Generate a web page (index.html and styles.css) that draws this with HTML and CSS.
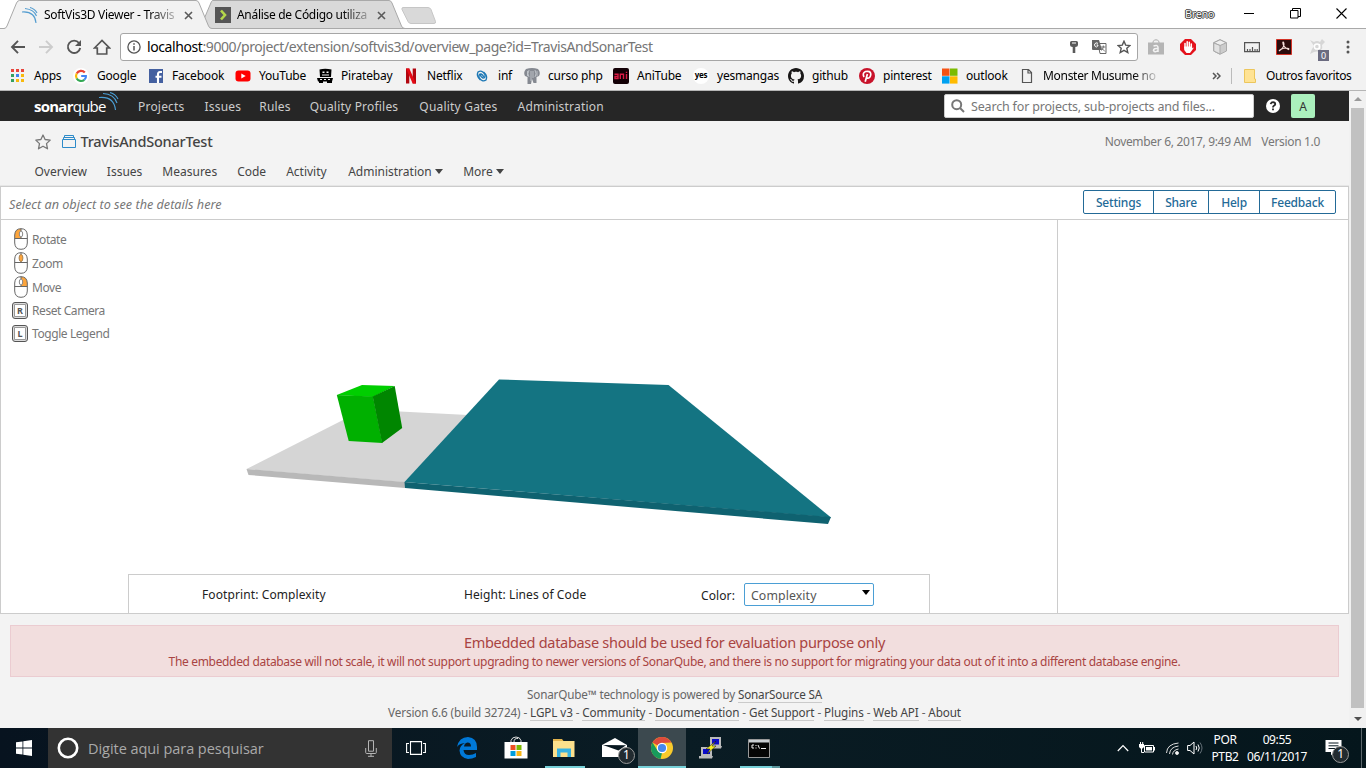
FILE: index.html
```html
<!DOCTYPE html>
<html lang="pt-BR">
<head>
<meta charset="utf-8">
<title>SoftVis3D Viewer - TravisAndSonarTest</title>
<link rel="stylesheet" href="styles.css">
</head>
<body>
<div class="tabstrip">
  <svg class="tab-shapes" width="450" height="29" viewBox="0 0 450 29">
    <path d="M0 28.5H450" stroke="#a9a9a9"/>
    <path d="M200 28.5L211.500 1.500Q212 .5 213 .5H389Q391 .5 392 3L401.500 26Q402.500 28.500 405 28.500Z" fill="#d9d9d9" stroke="#a9a9a9"/>
    <path d="M403 7.500H428Q430 7.500 431 9.500L435.500 21.500Q436 23.500 434 23.500H411Q409 23.500 408 21.500L402 9.500Q401.500 7.500 403 7.500Z" fill="#d9d9d9" stroke="#c6c6c6"/>
    <path d="M0 29V28.500H4Q6 28.500 7 26L16.500 3Q17.500 .5 19.500 .5H196Q198 .5 199 3L208.500 26Q209.500 28.500 212 28.500V29Z" fill="#f2f2f2"/>
    <path d="M0 28.500H4Q6 28.500 7 26L16.500 3Q17.500 .5 19.500 .5H196Q198 .5 199 3L208.500 26Q209.500 28.500 212 28.500" fill="none" stroke="#a9a9a9"/>
  </svg>
  <div class="tab tab-one">
    <svg width="16" height="16" viewBox="0 0 16 16" fill="none" stroke="#549dd0" stroke-width="1.100"><path d="M0 5Q13 4 14 16M3 1.500Q12 2.500 14.500 9M8 .5Q13 2 15 6"/></svg>
    <span class="tab-title">SoftVis3D Viewer - Travis</span>
    <svg class="x" width="9" height="9" viewBox="0 0 9 9"><path d="M1 1L8 8M8 1L1 8" stroke="#5a5a5a" stroke-width="1.600"/></svg>
  </div>
  <div class="tab tab-two">
    <svg width="16" height="16" viewBox="0 0 16 16"><path fill="#555" d="M0 0h16v16H0z"/><path d="M6 3.500L10 8L6 12.500" fill="none" stroke="#b5d84b" stroke-width="2.600"/></svg>
    <span class="tab-title">Análise de Código utiliza</span>
    <svg class="x" width="9" height="9" viewBox="0 0 9 9"><path d="M1 1L8 8M8 1L1 8" stroke="#5a5a5a" stroke-width="1.600"/></svg>
  </div>
  <div class="window-controls">
    <span class="user">Breno</span>
    <svg width="11" height="11" viewBox="0 0 11 11"><path d="M0 5.500h10" stroke="#000"/></svg>
    <svg width="11" height="11" viewBox="0 0 11 11" fill="none" stroke="#000"><path d="M.5 2.500h7.500v7.500h-7.500zM2.500 2.500v-2h8v8h-2.500"/></svg>
    <svg width="11" height="11" viewBox="0 0 11 11"><path d="M.5 .5l10 10M10.500 .5l-10 10" stroke="#000" stroke-width="1.100"/></svg>
  </div>
</div>

<div class="toolbar">
  <div class="nav-buttons">
    <svg width="16" height="16" viewBox="0 0 16 16" fill="none" stroke="#555" stroke-width="1.900"><path d="M15 8H2.500M8 1.800L2 8l6 6.200"/></svg>
    <svg width="16" height="16" viewBox="0 0 16 16" fill="none" stroke="#ccc" stroke-width="1.900"><path d="M1 8h12.500M8 1.800L14 8l-6 6.200"/></svg>
    <svg width="16" height="16" viewBox="0 0 16 16"><path d="M13 4A6.200 6.200 0 1 0 14.200 9" fill="none" stroke="#555" stroke-width="1.900"/><path d="M15 1v6H9z" fill="#555"/></svg>
    <svg width="18" height="16" viewBox="0 0 18 16"><path d="M1.500 9L9 1.500L16.500 9H13.700V15H4.300V9Z" fill="none" stroke="#555" stroke-width="1.700"/></svg>
  </div>
  <div class="omnibox">
    <svg width="14" height="14" viewBox="0 0 14 14"><circle cx="7" cy="7" r="6.100" fill="none" stroke="#555" stroke-width="1.300"/><path d="M7 6v4.500M7 3.300v1.500" stroke="#555" stroke-width="1.500"/></svg>
    <span class="url"><b>localhost</b>:9000/project/extension/softvis3d/overview_page?id=TravisAndSonarTest</span>
    <svg width="10" height="14" viewBox="0 0 10 14"><path d="M1 2.500Q1 1 2.500 1H7.500Q9 1 9 2.500V5Q9 7 6.300 7V13H3.700V7Q1 7 1 5Z" fill="#5a5a5a"/><path d="M3 3h4" stroke="#fff"/></svg>
    <svg width="15" height="14" viewBox="0 0 15 14"><path fill="#fff" stroke="#666" d="M6 3.500h8v10H8z"/><path fill="#666" d="M0 0h7l3 10H1Q0 10 0 9z"/><path d="M6 3.500Q5 2.500 4 3Q2.500 3.500 2.500 5Q3 7 4.500 7Q6 6.500 6 5H4.500" fill="none" stroke="#fff"/><path d="M9 7h4.500M11.300 5.500V7Q11 9 9.500 10.500M9.500 8L13 11.500" fill="none" stroke="#666" stroke-width=".9"/></svg>
    <svg width="14" height="14" viewBox="0 0 14 14"><path d="M7 1.200L8.700 5.100L13 5.500L9.800 8.300L10.800 12.500L7 10.300L3.200 12.500L4.200 8.300L1 5.500L5.300 5.100Z" fill="none" stroke="#555" stroke-width="1.400"/></svg>
  </div>
  <div class="extensions">
    <svg width="16" height="16" viewBox="0 0 16 16"><path d="M5 4V2.500Q8 -1 11 2.500V4" fill="none" stroke="#aaa"/><path fill="#b5b5b5" d="M0 3.500h16v12H0z"/><path d="M5.500 7Q10 5.500 10 8.500V13M10 9.500Q5.500 9 5.500 11.500Q7 14 10 11.500" fill="none" stroke="#f3f3f3" stroke-width="1.500"/></svg>
    <svg width="16" height="16" viewBox="0 0 16 16"><path fill="#e4121c" d="M5 0h6l5 5v6l-5 5H5l-5-5V5z"/><path d="M5 9V4.500M7.200 8V2.800M9.300 8V3.200M11.300 9V5" stroke="#fff" stroke-width="1.500" stroke-linecap="round"/><path fill="#fff" d="M4.200 7.500h7.900v2l1-1 .6.600L10 14H6.500L4.200 11z"/></svg>
    <svg width="16" height="16" viewBox="0 0 16 16" stroke="#aaa"><path d="M8 .6L14.500 3.700V12L8 15.300L1.500 12V3.700Z" fill="#ccc"/><path d="M1.800 3.800L8 6.500L14.200 3.800L8 .8Z" fill="#eee"/><path d="M8 6.500V15L1.800 12V4Z" fill="#e2e2e2"/></svg>
    <svg width="16" height="16" viewBox="0 0 16 16" fill="none" stroke="#555"><path stroke-width="1.200" d="M.6 3.600h14.800v9H.6zM3.500 10v2.500M6 10v2.500M8.500 8v4.500M11 10v2.500M13.200 10v2.500"/></svg>
    <svg width="16" height="16" viewBox="0 0 16 16"><path d="M.5 .5h15v15H.5z" fill="#2b0c0d" stroke="#d33327"/><path d="M3 12Q8 9 8 5Q7.500 2 6.800 3.500Q7 8 12.500 10.500Q14 9 10 9Q4.500 9.500 3 12Z" fill="none" stroke="#f5dedc" stroke-width="1.100"/></svg>
    <span class="ext-count"><svg width="16" height="16" viewBox="0 0 16 16"><path d="M1 1L5 3Q8 1 11 3L13 0L16 3L13 6Q14 9 12 11L11 13Q7 12 5 13L1 15L3 10L5 7Z" fill="#d6d6d6"/><circle cx="8" cy="7.500" r="2.600" fill="none" stroke="#fff" stroke-width="1.500"/><path d="M10.500 5v5" stroke="#fff" stroke-width="1.500"/></svg><i>0</i></span>
    <svg width="4" height="14" viewBox="0 0 4 14" fill="#555"><circle cx="2" cy="2" r="1.500"/><circle cx="2" cy="7" r="1.500"/><circle cx="2" cy="12" r="1.500"/></svg>
  </div>
</div>

<div class="bookmarks">
  <span class="bm bm-apps"><svg width="16" height="16" viewBox="0 0 16 16"><path fill="#e8453c" d="M1 1h3v3H1zM6 1h3v3H6zM11 1h3v3h-3z"/><path fill="#34a060" d="M1 6h3v3H1zM1 11h3v3H1z"/><path fill="#3f83ee" d="M6 6h3v3H6z"/><path fill="#f8b90c" d="M11 6h3v3h-3zM11 11h3v3h-3zM6 11h3v3H6z"/></svg>Apps</span>
  <span class="bm bm-google"><svg width="16" height="16" viewBox="0 0 16 16" fill="none" stroke-width="2.200"><circle cx="8" cy="8" r="8" fill="#fff"/><path d="M11.800 4.500A5 5 0 0 0 3.700 5.500" stroke="#ea4335"/><path d="M3.700 5.500A5 5 0 0 0 3.700 10.500" stroke="#fbbc05"/><path d="M3.700 10.500A5 5 0 0 0 11.300 11.800" stroke="#34a853"/><path d="M11.300 11.800Q13.300 10 12.900 8H8.200" stroke="#4285f4"/></svg>Google</span>
  <span class="bm bm-facebook"><svg width="16" height="16" viewBox="0 0 16 16"><path fill="#4460a0" d="M1 1h14v14H1z"/><path d="M10 15V6.500Q10 4 12 4H14M7.500 8.700H13.500" fill="none" stroke="#fff" stroke-width="2.100"/></svg>Facebook</span>
  <span class="bm bm-youtube"><svg width="16" height="16" viewBox="0 0 16 16"><rect y="2.500" x=".5" width="15" height="11" rx="3" fill="#f00"/><path fill="#fff" d="M6.300 5.500L10.700 8L6.300 10.500z"/></svg>YouTube</span>
  <span class="bm bm-pirate"><svg width="16" height="16" viewBox="0 0 16 16"><path d="M2.500 1.500Q8 0 14.500 1.500L14 9H3zM0 10h16l-1 3.500H1zM2 13.500h4V15H2zM10 13.500h5V15h-5z"/><path fill="#f2f2f2" d="M5.500 3.500h2v1.500h-2zM9.500 3.500h2v1.500h-2zM5 6.500h7v1H5zM3 11h2v1H3zM7 11h2v1H7zM11 11h2v1h-2z"/></svg>Piratebay</span>
  <span class="bm bm-netflix"><svg width="16" height="16" viewBox="0 0 16 16"><path fill="#b1060f" d="M3 .5h3.300v15H3zM9.700 .5H13v15H9.700z"/><path fill="#e50914" d="M3 .5h3.300L13 15.500H9.700z"/></svg>Netflix</span>
  <span class="bm bm-inf"><svg width="16" height="16" viewBox="0 0 16 16" fill="none" stroke="#1d78b5" stroke-width="1.400"><path d="M6.500 12Q2 8 4 4Q8 1.500 11 6.500Q11.500 10 9 10Q6.500 9 6.500 7"/><path d="M9.500 4Q14 8 12 12Q8 14.500 5 9.500Q4.500 6 7 6Q9.500 7 9.500 9"/></svg>inf</span>
  <span class="bm bm-curso"><svg width="16" height="16" viewBox="0 0 16 16"><path fill="#858991" d="M2 1Q8-1 14 1Q17 4 15 8L12.500 9V15H9.500L8 11L7 16H3.500V9L1 8Q-1 4 2 1z"/><path d="M5 2Q3 6 5 9M11 2Q13 6 11 9M7 3v10M9 3v7M3.500 3v5M13 3v5" fill="none" stroke="#ccd0d5" stroke-width=".8"/></svg>curso php</span>
  <span class="bm bm-ani"><svg width="16" height="16" viewBox="0 0 16 16"><rect width="16" height="16" rx="2" fill="#130006"/><path d="M1.500 6.200H5V10.500H2V8.500H5M7.300 11V6.200H10.500V11M13.500 6v5M13.500 3.800v1.300" fill="none" stroke="#da1c46" stroke-width="1.400"/></svg>AniTube</span>
  <span class="bm bm-yes"><span class="yes-icon">yes</span>yesmangas</span>
  <span class="bm bm-github"><svg width="16" height="16" viewBox="0 0 16 16"><path fill="#191717" d="M8 0C3.580 0 0 3.580 0 8c0 3.540 2.290 6.530 5.470 7.590.4.070.55-.17.550-.38 0-.19-.01-.82-.01-1.490-2.010.37-2.530-.49-2.690-.94-.09-.23-.48-.94-.82-1.130-.28-.15-.68-.52-.01-.53.63-.01 1.080.58 1.230.82.72 1.210 1.870.87 2.330.66.070-.52.28-.87.510-1.070-1.780-.2-3.640-.89-3.640-3.950 0-.87.310-1.590.82-2.150-.08-.2-.36-1.020.08-2.120 0 0 .67-.21 2.200.82.64-.18 1.320-.27 2-.27s1.360.09 2 .27c1.530-1.040 2.200-.82 2.200-.82.44 1.100.16 1.920.08 2.120.51.56.82 1.270.82 2.150 0 3.070-1.870 3.750-3.650 3.950.29.25.54.73.54 1.480 0 1.070-.01 1.930-.01 2.200 0 .21.15.46.55.38A8.010 8.010 0 0 0 16 8c0-4.420-3.580-8-8-8z"/></svg>github</span>
  <span class="bm bm-pinterest"><svg width="16" height="16" viewBox="0 0 16 16"><circle cx="8" cy="8" r="8" fill="#c8132b"/><path d="M5 9Q3 5 6.500 3.500Q11.500 2.500 11.800 6Q11.500 10 9 10.200Q7.500 10 7.500 9M8.400 6L6.200 13.800" fill="none" stroke="#fff" stroke-width="1.700"/></svg>pinterest</span>
  <span class="bm bm-outlook"><svg width="16" height="16" viewBox="0 0 16 16"><path fill="#f65314" d="M0 .5h7.500v7.300H0z"/><path fill="#7cbb00" d="M8 .5h7.500v7.300H8z"/><path fill="#00a1f1" d="M0 8.300h7.500v7.300H0z"/><path fill="#ffbb00" d="M8 8.300h7.500v7.300H8z"/></svg>outlook</span>
  <span class="bm bm-monster"><svg width="16" height="16" viewBox="0 0 16 16"><path d="M3.500 1.500H9.500L12.500 4.500V14.500H3.500ZM9 1.500V5H12.500" fill="none" stroke="#555" stroke-width="1.200"/></svg>Monster Musume no</span>
  <svg class="more-bm" width="9" height="8" viewBox="0 0 9 8"><path d="M1 1l3 3-3 3M5 1l3 3-3 3" fill="none" stroke="#555" stroke-width="1.500"/></svg>
  <span class="bm-sep"></span>
  <span class="bm bm-other"><svg width="14" height="16" viewBox="0 0 14 16"><path d="M.5 1.500h10v9.500h1v3.500h-11z" fill="#ffe394" stroke="#ecc65c"/></svg>Outros favoritos</span>
</div>

<div class="page">
  <main class="content">
    <nav class="topnav">
      <div class="logo"><b>sonar</b>qube<svg width="20" height="19" viewBox="0 0 20 19" fill="none" stroke="#4b9fd5" stroke-width="1.100"><path d="M0 5.500Q15 4 16.500 18M4 1.500Q15 2 18 11M11 .5Q16.500 2 19 7"/></svg></div>
      <div class="topnav-links"><a>Projects</a><a>Issues</a><a class="n-rules">Rules</a><a class="n-prof">Quality Profiles</a><a class="n-gates">Quality Gates</a><a>Administration</a></div>
      <div class="search"><svg width="14" height="14" viewBox="0 0 14 14" fill="none" stroke="#777" stroke-width="2"><circle cx="5.700" cy="5.700" r="4.500"/><path d="M9 9l4 4"/></svg><span>Search for projects, sub-projects and files...</span></div>
      <svg class="help" width="14" height="14" viewBox="0 0 14 14"><circle cx="7" cy="7" r="7" fill="#fff"/><path d="M4.700 5.200Q4.900 3.200 7 3.200Q9.300 3.300 9.200 5.200Q9 6.200 7.900 6.700Q7 7.200 7 8.400M7 9.500v1.800" fill="none" stroke="#262626" stroke-width="1.800"/></svg>
      <span class="avatar">A</span>
    </nav>
    <header class="project">
      <div class="project-row">
        <svg width="16" height="16" viewBox="0 0 16 16"><path d="M8 1L10.100 5.500L15.200 6.100L11.500 9.600L12.500 14.800L8 12.200L3.500 14.800L4.500 9.600L.8 6.100L5.900 5.500Z" fill="none" stroke="#777" stroke-width="1.300" stroke-linejoin="round"/></svg>
        <svg class="cube-icon" width="14" height="14" viewBox="0 0 14 14" fill="none" stroke="#2d8bc9"><path d="M.5 4.500h13v8h-13zM1.500 4V2.500h11V4M2.500 2V.5h9V2" /></svg>
        <h1>TravisAndSonarTest</h1>
        <span class="date">November 6, 2017, 9:49 AM</span><span class="version">Version 1.0</span>
      </div>
      <div class="subnav"><a>Overview</a><a>Issues</a><a>Measures</a><a>Code</a><a>Activity</a><a class="s-admin">Administration<i class="caret"></i></a><a>More<i class="caret"></i></a></div>
    </header>
    <section class="viewer">
      <div class="viewer-head"><em>Select an object to see the details here</em>
        <div class="buttons"><span class="b-set">Settings</span><span class="b-share">Share</span><span class="b-help">Help</span><span class="b-feed">Feedback</span></div>
      </div>
      <div class="viewer-body">
        <div class="scene">
          <svg class="scene-canvas" width="1056" height="393" viewBox="1 220 1056 393">
            <path fill="#d5d5d5" d="M246.500 469L343 420L365 410L400 411.500L468 415L405 482.300Z"/>
            <path fill="#b8b8b8" d="M246.500 469L405 482V488L248.500 475Z"/>
            <path fill="#147482" d="M499 379.500L668.500 385L831 517.500L404.500 482Z"/>
            <path fill="#0f6270" d="M404.500 482L831 517L828 524L405 488Z"/>
            <path fill="#00ce00" d="M336.800 395L362 385L394.700 386L373 397Z"/>
            <path fill="#00b000" d="M336.800 395L373 396.500L382.300 443L348.700 441Z"/>
            <path fill="#008600" d="M372.700 396.500L394.700 386L402.200 428L382 443Z"/>
          </svg>
          <ul class="controls">
            <li class="mouse"><svg width="14" height="22" viewBox="0 0 14 22"><path d="M.7 10.500V7Q1 .7 7 .7V10.500Z" fill="#fda53c"/><path d="M.7 7Q1 .7 7 .7Q13 .7 13.300 7V15Q13 21.300 7 21.300Q1 21.300 .7 15ZM.7 10.500H13.300M7 .7V10.500" fill="none" stroke="#666"/><ellipse cx="7" cy="6" rx="1.700" ry="3" fill="#fff" stroke="#888"/></svg><span>Rotate</span></li>
            <li class="mouse"><svg width="14" height="22" viewBox="0 0 14 22"><path d="M.7 7Q1 .7 7 .7Q13 .7 13.300 7V15Q13 21.300 7 21.300Q1 21.300 .7 15ZM.7 10.500H13.300M7 .7V10.500" fill="none" stroke="#666"/><ellipse cx="7" cy="6" rx="1.900" ry="3.500" fill="#fda53c" stroke="#a98252"/></svg><span>Zoom</span></li>
            <li class="mouse"><svg width="14" height="22" viewBox="0 0 14 22"><path d="M7 10.500V.7Q13 .7 13.300 7V10.500Z" fill="#fda53c"/><path d="M.7 7Q1 .7 7 .7Q13 .7 13.300 7V15Q13 21.300 7 21.300Q1 21.300 .7 15ZM.7 10.500H13.300M7 .7V10.500" fill="none" stroke="#666"/><ellipse cx="7" cy="6" rx="1.700" ry="3" fill="#fff" stroke="#888"/></svg><span>Move</span></li>
            <li class="key"><b>R</b>Reset Camera</li>
            <li class="key"><b>L</b>Toggle Legend</li>
          </ul>
          <div class="legend"><span class="l-foot">Footprint: Complexity</span><span class="l-height">Height: Lines of Code</span><span class="l-color">Color:</span><span class="select">Complexity<i class="caret"></i></span></div>
        </div>
        <aside class="side"></aside>
      </div>
    </section>
    <footer class="footer">
      <div class="alert"><p class="alert-title">Embedded database should be used for evaluation purpose only</p><p class="alert-text">The embedded database will not scale, it will not support upgrading to newer versions of SonarQube, and there is no support for migrating your data out of it into a different database engine.</p></div>
      <p class="powered">SonarQube™ technology is powered by <a>SonarSource SA</a></p>
      <p class="links">Version 6.6 (build 32724) - <a>LGPL v3</a> - <a>Community</a> - <a>Documentation</a> - <a>Get Support</a> - <a>Plugins</a> - <a>Web API</a> - <a>About</a></p>
    </footer>
  </main>
  <div class="scrollbar"><i class="up"></i><span class="thumb"></span><i class="down"></i></div>
</div>

<div class="taskbar">
  <div class="start"><svg width="16" height="16" viewBox="0 0 16 16" fill="#fff"><path d="M0 2.300L6.500 1.400V7.500H0zM7.300 1.300L16 0V7.500H7.300zM0 8.400H6.500V14.600L0 13.700zM7.300 8.400H16V16L7.300 14.700z"/></svg></div>
  <div class="cortana"><svg width="22" height="22" viewBox="0 0 22 22"><circle cx="11" cy="11" r="9.200" fill="none" stroke="#fff" stroke-width="2.600"/></svg><span>Digite aqui para pesquisar</span><svg width="12" height="17" viewBox="0 0 12 17" fill="none" stroke="#b5b5b5"><path d="M3.500 .7h5v10.500h-5zM.7 8v4.500q0 1 1 1h8.600q1 0 1-1V8M6 13.500v3M3 16.300h6"/></svg></div>
  <div class="apps">
    <span class="app"><svg width="20" height="14" viewBox="0 0 20 14" fill="none" stroke="#fff" stroke-width="1.100"><path d="M4.500 .6h11v12.800h-11zM3 2.500H.6v9H3M17 2.500h2.400v9H17"/></svg></span>
    <span class="app app-edge"><svg width="20" height="22" viewBox="0 0 20 22"><path fill="#0078d7" d="M0 10Q2 0 11 0Q20 1 20 10V13H6.500Q7 18 12 18Q16 18 19 16V20Q15 22 11 22Q3 21 2.500 13.500Q3 8 8 6Q2 6.500 0 10ZM7 9.500H14Q14 5.500 10.500 5.500Q7.500 6 7 9.500Z"/></svg></span>
    <span class="app app-store"><svg width="24" height="24" viewBox="0 0 24 24"><path d="M7 7V4.500Q8 1 12 1Q16 1 17 4.500V7M10 6Q10 2 14 2.500" fill="none" stroke="#ddd"/><path fill="#fff" d="M.5 6h23v16.500h-23z"/><path fill="#f05022" d="M6.500 9h5v5h-5z"/><path fill="#7db900" d="M12.500 9h5v5h-5z"/><path fill="#009ddc" d="M6.500 15h5v5h-5z"/><path fill="#f8b617" d="M12.500 15h5v5h-5z"/></svg></span>
    <span class="app app-files"><svg width="22" height="18" viewBox="0 0 22 18"><path fill="#e2b34d" d="M0 0h9l1.500 2H0z"/><path fill="#fce08c" d="M0 2h21.500v16H0z"/><path fill="#37b2e2" d="M4 9.500h14V18h-3.500v-4.500h-7V18H4z"/></svg></span>
    <span class="app app-mail"><svg width="26" height="20" viewBox="0 0 26 20"><path fill="#fff" d="M0 7L13 0L25 7V19H0z"/><path fill="#071720" d="M1 7L24 7.200L16.500 12.500Z"/></svg><i class="badge">1</i></span>
    <span class="app app-chrome"><svg width="22" height="22" viewBox="0 0 22 22"><circle cx="11" cy="11" r="11" fill="#f8ca2c"/><path fill="#dd4b3c" d="M11 11L1.500 5.500A11 11 0 0 1 20.500 5.500L11 6Z"/><path fill="#179b5c" d="M1.500 5.500L6.500 13.500L11 16L9.500 22A11 11 0 0 1 1.500 5.500Z"/><circle cx="11" cy="11" r="5.200" fill="#fff"/><circle cx="11" cy="11" r="4.100" fill="#4688ee"/></svg></span>
    <span class="app app-putty"><svg width="24" height="24" viewBox="0 0 24 24"><path fill="#bbb" d="M11 1h11v9H11zM13 10h10l-1 2.500h-9zM2 11h11v9H2zM0 20h14l-1 2.500H0z"/><path fill="#0b0bc9" d="M13 3h7v5.500h-7zM4 13h7v5H4z"/><path fill="#f7ee20" stroke="#111" stroke-width=".5" d="M17 5L7 13h4l-3 5 9-8h-4z"/></svg></span>
    <span class="app app-cmd"><svg width="22" height="19" viewBox="0 0 22 19"><path fill="#050505" stroke="#999" d="M.5 .5h21v18H.5z"/><path fill="#c9ced2" d="M1 1h20v2.500H1z"/><path d="M6 6H4v3h2M8 6v1M8 8.500v1M10 6l1.500 3.500M13 9.500h5" fill="none" stroke="#eee"/></svg></span>
  </div>
  <div class="tray">
    <svg class="t-up" width="12" height="8" viewBox="0 0 12 8"><path d="M.8 7L6 1.500L11.200 7" fill="none" stroke="#fff" stroke-width="1.200"/></svg>
    <svg class="t-bat" width="16" height="12" viewBox="0 0 16 12"><path d="M5.500 3.500h9v6.500h-9z" fill="none" stroke="#fff"/><path fill="#fff" d="M7 5h6v3.500H7zM15 5h1v3.500h-1zM0 2h5v3l-1.500 1.500h-2L0 5zM1 0h1v2H1zM3.200 0h1v2h-1z"/><path d="M2.500 6v4.500H5" fill="none" stroke="#fff"/></svg>
    <svg class="t-wifi" width="13" height="13" viewBox="0 0 13 13" fill="none" stroke="#ddd"><path d="M.5 11Q1 2 12.500 1M3.500 12Q4 5 12.500 4M6.500 12.500Q7 8 12.500 7"/><circle cx="11" cy="11" r="1.500" fill="#fff"/></svg>
    <svg class="t-vol" width="17" height="14" viewBox="0 0 17 14" fill="none" stroke="#fff"><path d="M.6 4.500H3L7 1V13L3 9.500H.6ZM9 5Q10.500 7 9 9M11 3.500Q13.500 7 11 10.500"/><path stroke="#657078" d="M13 1.500Q17 7 13 12.500"/></svg>
    <span class="lang">POR<br>PTB2</span>
    <span class="clock">09:55<br>06/11/2017</span>
    <span class="notif"><svg width="17" height="16" viewBox="0 0 17 16"><path fill="#fff" d="M.5 0h16v12H9l-3 3.500V12H.5z"/><path d="M3.500 3h10M3.500 5.800h10M3.500 8.500h7" stroke="#071720"/></svg><i class="badge">1</i></span>
    <span class="desktop-edge"></span>
  </div>
</div>
</body>
</html>
```
FILE: styles.css
```css
* { box-sizing: border-box; }
body { margin: 0; width: 1366px; height: 768px; overflow: hidden; display: flex; flex-direction: column; font: 12px/18px "Noto Sans", sans-serif; background: #fff; color: #000; }
p, h1, ul { margin: 0; padding: 0; }
svg { flex: none; display: block; }
i { font-style: normal; }
span, a { white-space: nowrap; }

.tabstrip { position: relative; height: 29px; border-bottom: 1px solid #a9a9a9; display: flex; align-items: flex-start; flex: none; }
.tab-shapes { position: absolute; left: 0; top: 0; }
.tab { position: relative; display: flex; align-items: center; height: 30px; gap: 6px; }
.tab-one { margin-left: 22px; width: 193px; }
.tab-two { width: 185px; }
.tab-title { width: 132px; overflow: hidden; letter-spacing: -.3px; -webkit-mask-image: linear-gradient(90deg, #000 105px, transparent 140px); mask-image: linear-gradient(90deg, #000 105px, transparent 140px); }
.tab .x { margin-left: 2px; }
.window-controls { margin-left: auto; display: flex; align-items: center; height: 27px; padding-right: 19px; }
.user { font-size: 11px; letter-spacing: -.4px; color: #fff; text-shadow: 0 0 1px #000, 0 1px 0 #555, 1px 0 0 #555, -1px 0 0 #555, 0 -1px 0 #555; margin-right: 30px; width: 29px; }
.window-controls svg + svg { margin-left: 35px; }

.toolbar { height: 33px; background: #f2f2f2; display: flex; align-items: center; flex: none; padding-top: 3px; }
.nav-buttons { display: flex; gap: 12px; width: 120px; padding-left: 10px; }
.nav-buttons svg:last-child { margin-left: -1px; }
.omnibox { width: 1018px; height: 28px; border: 1px solid #a6a6a6; border-radius: 3px; background: #fff; display: flex; align-items: center; padding: 0 6px; }
.url { font-size: 14px; letter-spacing: -.41px; color: #757575; margin-left: 6px; width: 924px; }
.url b { font-weight: 400; color: #000; }
.omnibox .url + svg + svg { margin-left: 13px; }
.omnibox svg:last-child { margin-left: 10px; }
.extensions { display: flex; align-items: center; gap: 16px; padding-left: 10px; }
.ext-count { position: relative; margin-left: 1px; margin-right: 1px; }
.ext-count i { position: absolute; left: 9px; top: 11px; width: 11px; height: 11px; background: #6b6b80; color: #fff; font-size: 9px; line-height: 11px; text-align: center; }
.extensions > svg:last-child { margin-left: 4px; }

.bookmarks { height: 29px; background: #f2f2f2; border-bottom: 1px solid #b5b5b5; display: flex; align-items: center; padding-left: 10px; flex: none; letter-spacing: -.2px; }
.bm { display: flex; align-items: center; gap: 8px; flex: none; }
.bm-apps { width: 63px; }
.bm-google { width: 75px; }
.bm-facebook { width: 87px; }
.bm-youtube { width: 82px; }
.bm-pirate { width: 86px; }
.bm-netflix { width: 71px; }
.bm-inf { width: 50px; }
.bm-curso { width: 89px; }
.bm-ani { width: 80px; }
.bm-yes { width: 95px; }
.bm-github { width: 71px; }
.bm-pinterest { width: 83px; }
.bm-outlook { width: 77px; }
.bm-monster { width: 140px; letter-spacing: -.3px; -webkit-mask-image: linear-gradient(90deg, #000 114px, transparent 142px); mask-image: linear-gradient(90deg, #000 114px, transparent 142px); }
.bm-other { letter-spacing: -.38px; }
.yes-icon { width: 16px; height: 16px; border-radius: 8px; background: #fff; font: bold 8px/14px "Open Sans", sans-serif; text-align: center; }
.more-bm { margin-left: 53px; }
.bm-sep { width: 1px; height: 16px; background: #bbb; margin: 0 12px 0 10px; }

.page { height: 637px; flex: none; display: flex; }
.content { width: 1349px; display: flex; flex-direction: column; background: #f3f3f3; }
.topnav { height: 30px; background: #262626; display: flex; align-items: center; color: #ccc; padding-left: 34px; }
.logo { position: relative; width: 104px; color: #fff; font: 15px/24px "Open Sans", sans-serif; letter-spacing: -.75px; }
.logo svg { position: absolute; left: 65px; top: -2px; }
.topnav-links { display: flex; gap: 20px; letter-spacing: .2px; width: 806px; padding-top: 2px; }
.n-rules { margin-left: -2px; }
.n-prof { margin-left: -1px; }
.n-gates { margin-left: 1px; }
.search { width: 310px; height: 24px; border-radius: 2px; background: #fff; color: #777; display: flex; align-items: center; gap: 6px; padding-left: 6px; border: 1px solid #ccc; font-size: 12.500px; letter-spacing: -.17px; }
.search span { padding-top: 2px; }
.help { margin-left: 12px; }
.avatar { margin-left: 11px; width: 24px; height: 24px; background: #abf0bd; border-radius: 2px; color: #333; line-height: 25px; text-align: center; }
.project { height: 65px; padding: 0 29px 0 34.500px; border-bottom: 1px solid #e6e6e6; }
.project-row { display: flex; align-items: center; height: 41px; color: #777; letter-spacing: -.33px; }
.cube-icon { margin-left: 11px; }
h1 { font: 500 14.500px/20px "Noto Sans", sans-serif; color: #444; margin: -2px 0 0 5px; letter-spacing: -.23px; }
.date { margin-left: auto; }
.version { margin-left: 10px; }
.subnav { display: flex; gap: 20px; color: #444; line-height: 19px; }
.s-admin { margin-left: 1.500px; }
.caret { display: inline-block; border: 4px solid transparent; border-top: 5px solid currentColor; border-bottom: 0; margin-left: 3.500px; vertical-align: 2px; }

.viewer { height: 428px; border: 1px solid #ccc; background: #fff; }
.viewer-head { height: 33px; border-bottom: 1px solid #ccc; display: flex; justify-content: space-between; padding: 3px 12px 0 8px; color: #777; }
.viewer-head em { line-height: 28px; font-size: 12.650px; }
.buttons { display: flex; height: 24px; border: 1px solid #236a97; border-radius: 2px; color: #236a97; font-weight: 500; line-height: 24px; text-align: center; letter-spacing: -.2px; }
.buttons span + span { border-left: 1px solid #236a97; }
.b-set { width: 69px; }
.b-share { width: 55px; }
.b-help { width: 51px; }
.b-feed { width: 76px; }
.viewer-body { display: flex; height: 393px; }
.scene { position: relative; width: 1056px; }
.scene-canvas { position: absolute; left: 0; top: 0; }
.side { flex: 1; border-left: 1px solid #ccc; }
.controls { position: absolute; left: 11px; top: 7px; list-style: none; color: #777; letter-spacing: -.42px; }
.controls li { display: flex; align-items: center; gap: 4px; }
.controls .mouse { height: 24px; padding-left: 2px; }
.mouse span { padding-top: 2px; }
.key { height: 23px; }
.key b { width: 16px; height: 17px; border: 1px solid #555; box-shadow: inset 0 0 0 1px #ddd, inset 0 0 0 2px #999; border-radius: 3px; font: bold 9px/15px "Noto Sans", sans-serif; text-align: center; letter-spacing: 0; color: #555; }
.legend { position: absolute; left: 127px; bottom: 0; width: 802px; height: 39px; border: 1px solid #ccc; border-bottom: 0; background: #fff; display: flex; align-items: center; padding: 2px 0 0 73px; color: #222; letter-spacing: .1px; }
.l-foot { width: 262px; }
.l-height { width: 237px; }
.l-color { width: 43px; padding-top: 1px; }
.select { width: 130px; height: 23px; margin-top: -2px; border: 1px solid #4b9fd5; border-radius: 2px; color: #555; display: flex; align-items: center; justify-content: space-between; padding: 3px 3px 0 6px; font-size: 12.300px; }
.select .caret { color: #000; margin-top: -7px; }

.footer { padding: 11px 10px 0; text-align: center; color: #666; }
.alert { height: 52px; background: #f2dede; border: 1px solid #ebccd1; color: #a94442; padding-top: 6px; }
.alert-title { font-size: 14.500px; line-height: 20px; letter-spacing: -.3px; }
.alert-text { font-size: 12px; line-height: 20px; letter-spacing: -.33px; white-space: nowrap; }
.powered { margin-top: 8px; font-size: 11.700px; letter-spacing: -.18px; }
.links { font-size: 11.700px; letter-spacing: -.09px; }
.footer a { color: #444; border-bottom: 1px solid #cacaca; }
.scrollbar { width: 17px; background: #f1f1f1; display: flex; flex-direction: column; align-items: center; }
.thumb { width: 13px; height: 600px; margin-top: 7px; background: #c1c1c1; }
.up { border: 4px solid transparent; border-bottom-color: #999; border-top: 0; margin-top: 6px; height: 4px; }
.down { border: 4px solid transparent; border-top-color: #505050; border-bottom: 0; margin-top: 9px; }

.taskbar { height: 40px; background: linear-gradient(90deg, #07131f, #0a1c24 50%, #05161c); display: flex; color: #fff; flex: none; }
.start { width: 48px; display: flex; align-items: center; justify-content: center; }
.cortana { width: 344px; background: #333; display: flex; align-items: center; padding-left: 9px; color: #aaa; font: 14.500px/20px "Open Sans", sans-serif; letter-spacing: -.05px; }
.cortana span { margin-left: 9px; width: 277px; padding-top: 1px; }
.apps { display: flex; width: 401px; }
.app { position: relative; width: 48px; margin-right: 1px; display: flex; align-items: center; justify-content: center; flex: none; }
.app-edge, .app-store { padding-left: 3px; }
.app-files { padding-left: 2px; background: linear-gradient(#76d0d8, #76d0d8) 6px 100% / 40px 2px no-repeat; }
.app-mail { padding-left: 5px; }
.app-chrome { margin-left: 1px; background: #3c494f; box-shadow: inset 0 -2px #76d0d8; }
.app-cmd { margin-left: -1px; background: linear-gradient(90deg, #76d0d8 32px, #5b969c 32px) 5px 100% / 40px 2px no-repeat; }
.badge { position: absolute; width: 17px; height: 17px; border: 1px solid #999; border-radius: 50%; background: #222b30; text-align: center; line-height: 14px; }
.app-mail .badge { right: 1px; top: 19px; }
.tray { flex: 1; display: flex; align-items: center; padding-left: 324px; line-height: 17px; text-align: center; letter-spacing: -.4px; position: relative; }
.t-bat { margin-left: 10px; }
.t-wifi { margin-left: 11px; }
.t-vol { margin-left: 8px; }
.lang { margin-left: 5px; width: 32px; }
.clock { margin-left: 5px; width: 62px; }
.notif { position: relative; margin-left: 17px; }
.notif .badge { left: 7px; top: 6px; }
.desktop-edge { position: absolute; right: 4px; top: 0; width: 1px; height: 40px; background: #5b666b; }
```
